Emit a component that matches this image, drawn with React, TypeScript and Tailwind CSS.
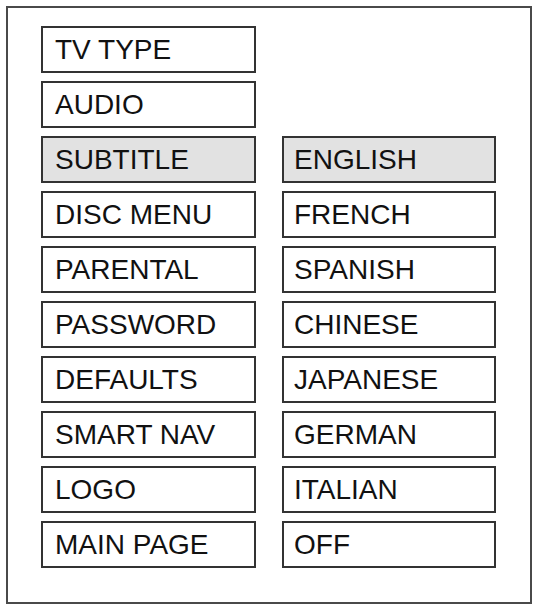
import React from "react";

const left = ["TV TYPE", "AUDIO", "SUBTITLE", "DISC MENU", "PARENTAL", "PASSWORD", "DEFAULTS", "SMART NAV", "LOGO", "MAIN PAGE"];
const right = ["", "", "ENGLISH", "FRENCH", "SPANISH", "CHINESE", "JAPANESE", "GERMAN", "ITALIAN", "OFF"];

function Box({ label, active, side }: { label: string; active?: boolean; side: "l" | "r" }) {
  return (
    <div
      className={`h-[47px] border-2 border-[#333333] flex items-center text-[28px] leading-none text-[#111111] ${side === "l" ? "pl-[12px]" : "pl-[10px]"} ${active ? "bg-[#e2e2e2]" : "bg-white"}`}
      style={{ fontFamily: '"Liberation Sans", Arial, sans-serif' }}
    >
      {label}
    </div>
  );
}

export default function App() {
  return (
    <div className="w-[535px] h-[606px] bg-white p-[6px]">
      <div className="w-[526px] h-[598px] border-2 border-[#4a4a4a] pl-[33px] pt-[18px]">
        <div className="grid grid-cols-[215px_214px] gap-x-[26px] gap-y-[8px]">
          {left.map((l, i) => (
            <React.Fragment key={l}>
              <Box label={l} active={i === 2} side="l" />
              {right[i] ? <Box label={right[i]} active={i === 2} side="r" /> : <div className="h-[47px]" />}
            </React.Fragment>
          ))}
        </div>
      </div>
    </div>
  );
}
